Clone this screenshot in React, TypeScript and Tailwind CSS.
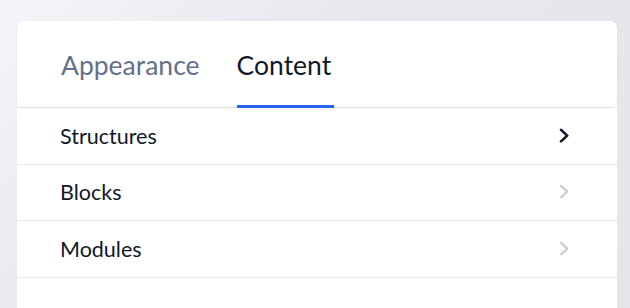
import React from "react";

function Chevron({ dark }: { dark: boolean }) {
  return (
    <svg width="12" height="16" viewBox="0 0 12 16" fill="none">
      <path
        d="M3 1.8 L9.2 7.6 L3 13.4"
        stroke={dark ? "#111827" : "#c8c9cc"}
        strokeWidth={dark ? 2.6 : 2}
        strokeLinecap="round"
        strokeLinejoin="round"
      />
    </svg>
  );
}

export default function App() {
  const rows = [
    { label: "Structures", dark: true },
    { label: "Blocks", dark: false },
    { label: "Modules", dark: false },
  ];
  return (
    <div
      className="h-[308px] w-[630px] overflow-hidden bg-[linear-gradient(135deg,#f4f5f8_0%,#e6e8ed_40%,#e4e6eb_100%)] pl-[17px] pt-[21px]"
      style={{ fontFamily: "Lato, 'Open Sans', sans-serif" }}
    >
      <div className="h-[300px] w-[600px] rounded-t-[8px] bg-white">
        <div className="relative flex h-[86px] items-end gap-[37px] rounded-[8px] bg-white pl-[44px] shadow-[0_1px_2px_rgba(0,0,0,0.06)]">
          <div className="pb-[24px] text-[26.5px] leading-[36px] text-[#64708c]">Appearance</div>
          <div className="relative pb-[24px] text-[26.5px] leading-[36px] text-[#111827]">
            Content
            <div className="absolute bottom-[-1px] left-0 h-[3px] w-[97px] bg-[#2463eb]" />
          </div>
        </div>
        <div className="border-t border-[#e9eaed]">
          {rows.map((r) => (
            <div
              key={r.label}
              className="flex h-[56.5px] items-center justify-between border-b border-[#e9eaed] pl-[43px] pr-[47px] text-[21.5px] text-[#111827]"
            >
              <span>{r.label}</span>
              <Chevron dark={r.dark} />
            </div>
          ))}
        </div>
      </div>
    </div>
  );
}
